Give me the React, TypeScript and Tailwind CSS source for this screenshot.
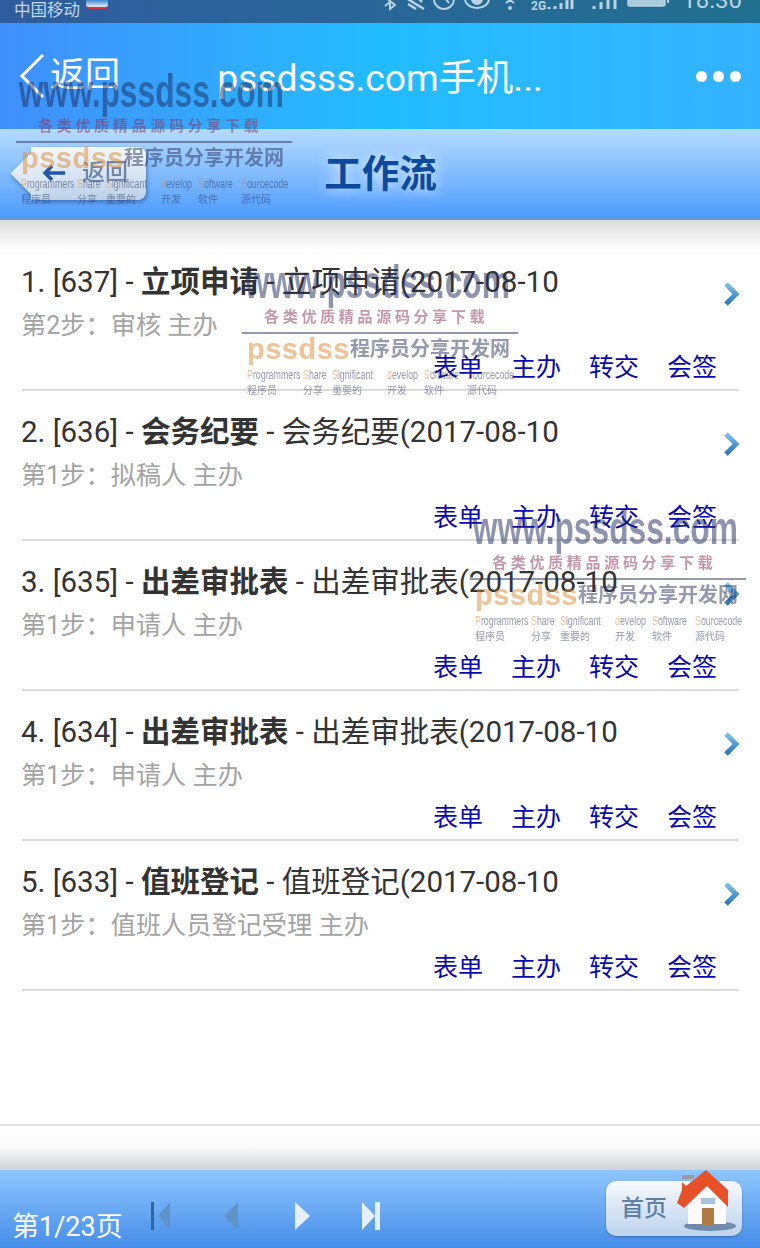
const TASKS = [
  { no: 1, id: 637, name: "立项申请", step: "第2步：审核 主办" },
  { no: 2, id: 636, name: "会务纪要", step: "第1步：拟稿人 主办" },
  { no: 3, id: 635, name: "出差审批表", step: "第1步：申请人 主办" },
  { no: 4, id: 634, name: "出差审批表", step: "第1步：申请人 主办" },
  { no: 5, id: 633, name: "值班登记", step: "第1步：值班人员登记受理 主办" },
]

const ACTIONS = ["表单", "主办", "转交", "会签"]

const MARK_WORDS = [
  { width: "w-[56px]", head: "P", rest: "rogrammers", cn: "程序员" },
  { width: "w-[29px]", head: "S", rest: "hare", cn: "分享" },
  { width: "w-[55px]", head: "S", rest: "ignificant", cn: "重要的" },
  { width: "w-[37px]", head: "d", rest: "evelop", cn: "开发" },
  { width: "w-[43px]", head: "S", rest: "oftware", cn: "软件" },
  { width: "w-[46px]", head: "S", rest: "ourcecode", cn: "源代码" },
]

function Watermark({ className }: { className: string }) {
  return (
    <div className={`absolute w-[276px] opacity-50 pointer-events-none ${className}`}>
      <div className="h-[42px] pl-[4px] whitespace-nowrap origin-left scale-x-[0.69] font-['Liberation_Sans',sans-serif] font-bold text-[46px] leading-[36px] text-[#1f2c5e]">
        www.pssdss.com
      </div>
      <div className="h-[26px] pl-[22px] whitespace-nowrap text-[15px] leading-[22px] font-bold tracking-[3.7px] text-[#8d2f55]">
        各类优质精品源码分享下载
      </div>
      <div className="h-[2px] bg-[#2a3158]" />
      <div className="h-[31px] flex items-center pl-[5px] whitespace-nowrap">
        <span className="w-[103px] text-[29px] leading-[31px] font-bold tracking-[0.5px] text-[#e2892f] font-['Liberation_Sans',sans-serif]">pssdss</span>
        <span className="text-[20px] leading-[31px] font-bold text-[#2c3560]">程序员分享开发网</span>
      </div>
      <div className="h-[20px] flex pl-[5px] whitespace-nowrap text-[13px] leading-[20px] text-[#2c3560] font-['Liberation_Sans',sans-serif]">
        {MARK_WORDS.map((w) => (
          <span key={w.width} className={`${w.width} block origin-left scale-x-[0.68]`}>
            <span className="text-[#e2892f]">{w.head}</span>
            {w.rest}
          </span>
        ))}
      </div>
      <div className="h-[14px] flex pl-[5px] whitespace-nowrap text-[10px] leading-[12px] text-[#2c3560]">
        {MARK_WORDS.map((w) => (
          <span key={w.width} className={w.width}>{w.cn}</span>
        ))}
      </div>
    </div>
  )
}

function StatusIcons() {
  return (
    <svg width="295" height="23" viewBox="0 0 295 23" fill="none" stroke="#b9d3e4" strokeWidth="2">
      <path d="M3 -3 L13 5 L8 9 V-6 M3 6 L8 2" />
      <path d="M24 -2 L42 9 M26 4 L34 9 M36 -2 L40 2" strokeWidth="2.5" />
      <circle cx="62" cy="-1" r="10" />
      <path d="M62 -3 L67 3" />
      <ellipse cx="95" cy="-1" rx="12" ry="9" />
      <circle cx="95" cy="-1" r="5" fill="#b9d3e4" />
      <path d="M124 3 L128 0 L132 3" />
      <circle cx="128" cy="8" r="2" fill="#b9d3e4" stroke="none" />
      <text x="149" y="10" fontSize="12" fontWeight="700" fill="#b9d3e4" stroke="none">2G</text>
      <path d="M167 9 V7 M173 9 V6 M179 9 V3 M185 9 V-2 M190 9 V-2" strokeWidth="3" />
      <path d="M212 9 V6 M219 9 V2 M226 9 V-2 M233 9 V-2" strokeWidth="3" />
      <rect x="246" y="-8" width="37" height="14" rx="2" fill="#a9cbdc" strokeWidth="1.5" />
      <rect x="285" y="-1" width="2" height="4" fill="#b9d3e4" stroke="none" />
    </svg>
  )
}

function StatusBar() {
  return (
    <div className="h-[23px] shrink-0 overflow-hidden flex bg-gradient-to-r from-[#2f5c9e] to-[#20708f] pl-[14px] pr-[18px]">
      <span className="mt-[1px] text-[16.5px] leading-[20px] text-[#c6d8ec]">中国移动</span>
      <span className="ml-[6px] w-[22px] h-[9px] bg-gradient-to-b from-[#3a86d0] to-[#e6edf5] border-b-2 border-[#d0344a] rounded-b-sm" />
      <div className="ml-auto flex">
        <StatusIcons />
        <span className="ml-[5px] -mt-[12px] text-[24px] leading-[24px] text-[#b9d3e4]">18:30</span>
      </div>
    </div>
  )
}

function TitleBar() {
  return (
    <div className="h-[106px] shrink-0 grid grid-cols-[1fr_auto_1fr] items-center bg-gradient-to-r from-[#3f8ffb] via-[#20bcff] to-[#34b2ff] text-white">
      <div className="flex items-center pl-[18px]">
        <svg width="28" height="46" viewBox="0 0 28 46" fill="none" stroke="white" strokeWidth="3">
          <path d="M25 2 L4 23 L25 44" />
        </svg>
        <span className="ml-[4px] text-[35px] leading-[44px]">返回</span>
      </div>
      <div className="mt-[4px] text-[37.3px] leading-[44px] whitespace-nowrap">pssdsss.com手机...</div>
      <div className="flex justify-end gap-[6px] pr-[19px]">
        <span className="w-[11px] h-[11px] rounded-full bg-white" />
        <span className="w-[11px] h-[11px] rounded-full bg-white" />
        <span className="w-[11px] h-[11px] rounded-full bg-white" />
      </div>
    </div>
  )
}

function SubHeader() {
  return (
    <div className="h-[91px] shrink-0 grid grid-cols-[1fr_auto_1fr] items-center border-b-2 border-[#6f97dc] bg-gradient-to-b from-[#b4dbff] to-[#4c9aff]">
      <div className="pl-[13px] -mt-[1px] drop-shadow-[1px_2px_2px_rgba(30,60,110,0.55)]">
        <div className="relative ml-[18px] w-[115px] h-[53px] rounded-r-lg bg-gradient-to-b from-[#f4f9fe] to-[#bcd0e8] flex items-center pl-[11px]">
          <span className="absolute -left-[13px] top-[8px] w-[37px] h-[37px] rotate-45 bg-gradient-to-br from-[#f4f9fe] to-[#c9d9ec]" />
          <svg className="relative" width="24" height="18" viewBox="0 0 24 18" fill="none" stroke="#2456a6" strokeWidth="3.5">
            <path d="M23 9 H3 M10 2 L3 9 L10 16" />
          </svg>
          <span className="relative ml-[16px] text-[23px] leading-[28px] font-medium text-[#6d87a8]">返回</span>
        </div>
      </div>
      <h1 className="ml-[1px] text-[37.5px] leading-[46px] font-bold text-[#0b4a9c] [text-shadow:0_0_14px_#eaf6ff]">工作流</h1>
      <div />
    </div>
  )
}

function ChevronRight() {
  return (
    <svg className="mt-[20px] -mr-[1px] shrink-0" width="16" height="24" viewBox="0 0 16 24" fill="none">
      <defs>
        <linearGradient id="chev" x1="0" y1="0" x2="0" y2="1">
          <stop offset="0" stopColor="#7cc0ee" />
          <stop offset="1" stopColor="#2a78b8" />
        </linearGradient>
      </defs>
      <path d="M2 2 L12 12 L2 22" stroke="url(#chev)" strokeWidth="5" />
    </svg>
  )
}

function TaskRow({ task }: { task: (typeof TASKS)[number] }) {
  return (
    <div className="h-[150px] flex flex-col border-b-2 border-[#dcdcdc]">
      <div className="flex justify-between items-start pt-[21px] h-[61px]">
        <div className="-ml-[1px] text-[29.5px] leading-[40px] text-[#333] whitespace-nowrap">
          {task.no}. [{task.id}] - <b className="font-bold">{task.name}</b> - {task.name}(2017-08-10
        </div>
        <ChevronRight />
      </div>
      <div className="mt-[4px] -ml-[1px] text-[25.2px] leading-[40px] text-[#a3a3a3]">{task.step}</div>
      <div className="mt-[2px] flex justify-end gap-[28px] pr-[22px] text-[25px] leading-[40px] text-[#0808b0]">
        {ACTIONS.map((a) => (
          <a key={a}>{a}</a>
        ))}
      </div>
    </div>
  )
}

function PagerIcon({ kind }: { kind: "first" | "prev" | "next" | "last" }) {
  const dim = kind === "first" || kind === "prev"
  const fill = dim ? "#5f93c9" : "#e6f0fa"
  return (
    <svg width="24" height="32" viewBox="0 0 24 32">
      {kind === "first" && (
        <>
          <rect x="1" y="2" width="3" height="28" fill="#32659e" />
          <path d="M20 2 V30 L8 16 Z" fill={fill} />
        </>
      )}
      {kind === "prev" && <path d="M18 2 V30 L4 16 Z" fill={fill} />}
      {kind === "next" && <path d="M5 2 V30 L20 16 Z" fill={fill} />}
      {kind === "last" && (
        <>
          <path d="M2 2 V30 L15 16 Z" fill={fill} />
          <rect x="15" y="2" width="5" height="28" fill={fill} />
        </>
      )}
    </svg>
  )
}

function HomeButton() {
  return (
    <div className="relative w-[136px] h-[55px] rounded-[10px] bg-gradient-to-b from-[#f7fafd] to-[#bcd2ec] shadow-[0_1px_2px_rgba(30,60,110,0.5)] flex items-center pl-[15px]">
      <span className="text-[23px] leading-[30px] font-medium text-[#5f7fa8]">首页</span>
      <svg className="absolute left-[70px] -top-[11px]" width="60" height="62" viewBox="0 0 60 62">
        <ellipse cx="34" cy="56" rx="26" ry="5" fill="#4d6a8f" opacity="0.7" />
        <path d="M12 34 L32 16 L50 34 V54 H12 Z" fill="#fbfbfb" />
        <rect x="26" y="38" width="12" height="17" fill="#b07a45" />
        <rect x="25" y="28" width="14" height="6" fill="#a8c4e0" />
        <rect x="6" y="5" width="12" height="4" fill="#9a9a9a" />
        <path d="M1 33 L6 20 V12 L10 16 L30 0 L52 20 V37 L31 16 L8 38 Z" fill="#e8502a" />
      </svg>
    </div>
  )
}

export default function App() {
  return (
    <div className="relative h-[1248px] w-[760px] overflow-hidden flex flex-col bg-white font-['Roboto','Noto_Sans_CJK_SC',sans-serif]">
      <StatusBar />
      <TitleBar />
      <SubHeader />

      <main className="flex-1 min-h-0 flex flex-col">
        <div className="h-[30px] shrink-0 bg-gradient-to-b from-[#dcdcdc] to-white" />
        <div className="flex-1 pl-[22px] pr-[21px] -mt-[9px]">
          {TASKS.map((t) => (
            <TaskRow key={t.id} task={t} />
          ))}
        </div>
      </main>

      <div className="h-[46px] shrink-0 border-t-2 border-[#e4e4e4] bg-gradient-to-b from-white via-[#fafafa] to-[#cfd2d6]" />

      <footer className="h-[78px] shrink-0 flex bg-gradient-to-b from-[#8ec6ff] to-[#458de8] text-white">
        <span className="pl-[12px] pt-[38px] w-[150px] text-[27px] leading-[38px] whitespace-nowrap">第1/23页</span>
        <div className="flex gap-[46px] pt-[30px]">
          <PagerIcon kind="first" />
          <PagerIcon kind="prev" />
          <PagerIcon kind="next" />
          <PagerIcon kind="last" />
        </div>
        <div className="ml-auto pt-[11px] pr-[18px]">
          <HomeButton />
        </div>
      </footer>

      <Watermark className="left-[16px] top-[73px]" />
      <Watermark className="left-[242px] top-[264px]" />
      <Watermark className="left-[470px] top-[510px]" />
    </div>
  )
}
